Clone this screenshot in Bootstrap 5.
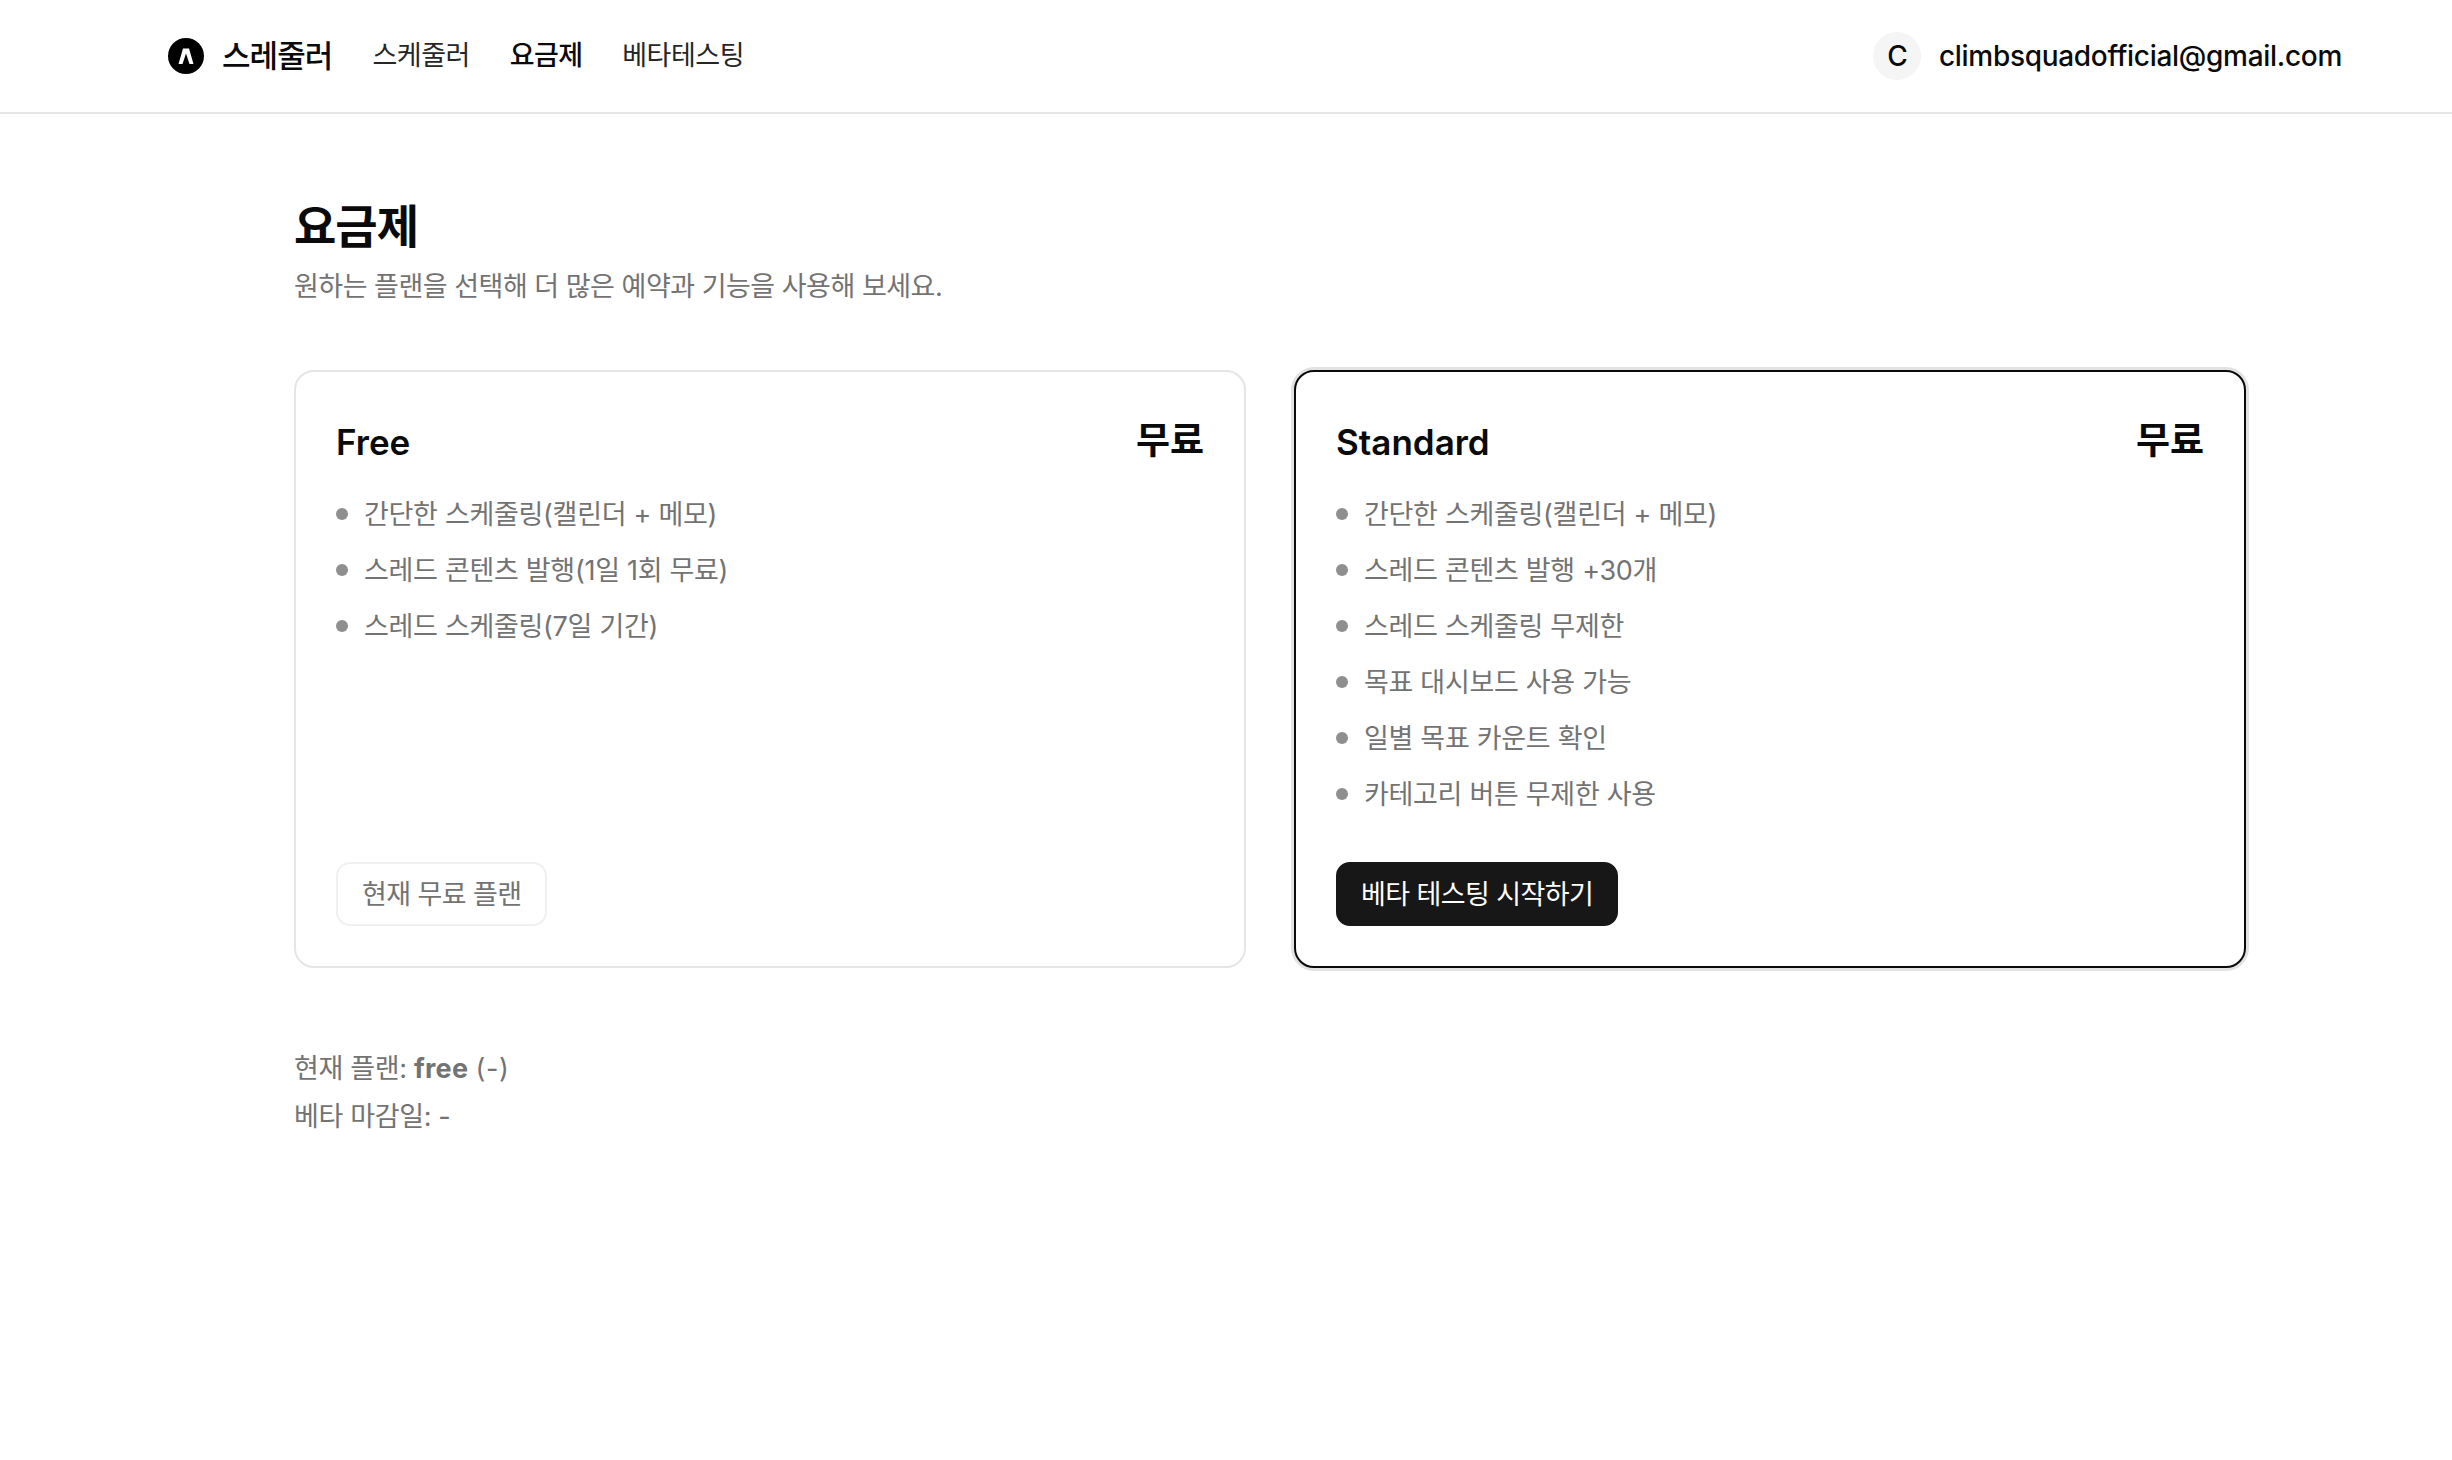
<!doctype html>
<html lang="ko"><head><meta charset="utf-8">
<link href="https://cdn.jsdelivr.net/npm/bootstrap@5.3.0/dist/css/bootstrap.min.css" rel="stylesheet">
<style>
body{font-family:Inter,"Noto Sans CJK KR",sans-serif;color:#0a0a0a;background:#fff}
.topbar{height:114px;border-bottom:2px solid #e5e5e5;padding:0 110px 0 168px}
.brand{font-size:31px;font-weight:500;letter-spacing:-.9px;color:#0a0a0a;text-decoration:none;gap:18px}
.logo{width:36px;height:36px;flex:none}
.navgroup{margin-left:40px;gap:40px;padding-top:1px}
.navlink{font-size:27px;font-weight:400;color:#262626;text-decoration:none;letter-spacing:-.5px}
.navlink.on{font-weight:500;color:#0a0a0a;letter-spacing:-.7px}
.avatar{width:48px;height:48px;border-radius:50%;background:#f5f5f5;font-size:28px;font-weight:500;flex:none;padding-left:1px}
.acct{gap:18px}
.email{font-size:28px;font-weight:500;letter-spacing:-.3px}
.mainwrap{padding:80px 206px 0 294px}
.pagetitle{font-size:46px;font-weight:700;line-height:64px;letter-spacing:-1px;margin:0}
.subtitle{font-size:27px;line-height:40px;color:#737373;margin:9px 0 0;letter-spacing:-.5px}
.plans{display:grid;grid-template-columns:1fr 1fr;gap:48px;margin-top:63px}
.plan{border:2px solid #e5e5e5;border-radius:20px;padding:45px 40px 40px;background:#fff;height:598px}
.plan.sel{border:2px solid #0a0a0a;box-shadow:0 0 0 3px #e2e2e2}
.planname{font-size:35px;font-weight:600;line-height:50px;margin:0}
.price{font-size:37px;font-weight:700;line-height:50px;margin-top:-1px}
.feats{list-style:none;padding:0;margin:28px 0 0}
.feats li{font-size:27px;line-height:40px;color:#737373;margin-bottom:16px;letter-spacing:-.3px}
.dot{width:12px;height:12px;border-radius:50%;background:#8f8f8f;flex:none;margin-top:-2px}
.btn.planbtn{font-size:27px;line-height:40px;padding:11px 23px 9px;border-radius:14px;letter-spacing:-.6px}
.btn.planbtn.off{background:#fff;color:#737373;border:2px solid #f0f0f0;opacity:1;padding-left:24px;padding-right:24px}
.btn.planbtn.go{background:#171717;color:#fff;border:2px solid #171717}
.foot{margin-top:77px;font-size:27px;line-height:48px;color:#737373;letter-spacing:-.35px}
.foot strong{letter-spacing:.3px;font-weight:700}
.foot em{font-style:normal;letter-spacing:.6px}
</style></head><body>
<header class="topbar d-flex align-items-center justify-content-between">
 <div class="d-flex align-items-center">
  <a class="brand d-flex align-items-center" href="#"><svg class="logo" viewBox="0 0 36 36"><circle cx="18" cy="18" r="18" fill="#000"/><path d="M10.500 26 15 10.500h6L25.500 26h-4L18 15.500 14.500 26z" fill="#fff"/></svg>스레줄러</a>
  <nav class="navgroup d-flex align-items-center"><a class="navlink" href="#">스케줄러</a><a class="navlink on" href="#">요금제</a><a class="navlink" href="#">베타테스팅</a></nav>
 </div>
 <div class="acct d-flex align-items-center"><span class="avatar d-flex align-items-center justify-content-center">C</span><span class="email">climbsquadofficial@gmail.com</span></div>
</header>
<main class="mainwrap">
 <h1 class="pagetitle">요금제</h1>
 <p class="subtitle">원하는 플랜을 선택해 더 많은 예약과 기능을 사용해 보세요.</p>
 <div class="plans">
  <section class="plan d-flex flex-column">
   <div class="d-flex justify-content-between align-items-start"><h2 class="planname">Free</h2><span class="price">무료</span></div>
   <ul class="feats">
    <li class="d-flex align-items-center gap-3"><span class="dot"></span>간단한 스케줄링(캘린더 + 메모)</li>
    <li class="d-flex align-items-center gap-3"><span class="dot"></span>스레드 콘텐츠 발행(1일 1회 무료)</li>
    <li class="d-flex align-items-center gap-3"><span class="dot"></span>스레드 스케줄링(7일 기간)</li>
   </ul>
   <div class="mt-auto"><button class="btn planbtn off" disabled>현재 무료 플랜</button></div>
  </section>
  <section class="plan sel d-flex flex-column">
   <div class="d-flex justify-content-between align-items-start"><h2 class="planname">Standard</h2><span class="price">무료</span></div>
   <ul class="feats">
    <li class="d-flex align-items-center gap-3"><span class="dot"></span>간단한 스케줄링(캘린더 + 메모)</li>
    <li class="d-flex align-items-center gap-3"><span class="dot"></span>스레드 콘텐츠 발행 +30개</li>
    <li class="d-flex align-items-center gap-3"><span class="dot"></span>스레드 스케줄링 무제한</li>
    <li class="d-flex align-items-center gap-3"><span class="dot"></span>목표 대시보드 사용 가능</li>
    <li class="d-flex align-items-center gap-3"><span class="dot"></span>일별 목표 카운트 확인</li>
    <li class="d-flex align-items-center gap-3"><span class="dot"></span>카테고리 버튼 무제한 사용</li>
   </ul>
   <div class="mt-auto"><button class="btn planbtn go">베타 테스팅 시작하기</button></div>
  </section>
 </div>
 <div class="foot"><div>현재 플랜: <strong>free</strong> <em>(-)</em></div><div>베타 마감일: -</div></div>
</main>
<script src="https://cdn.jsdelivr.net/npm/bootstrap@5.3.0/dist/js/bootstrap.bundle.min.js"></script>
</body></html>
